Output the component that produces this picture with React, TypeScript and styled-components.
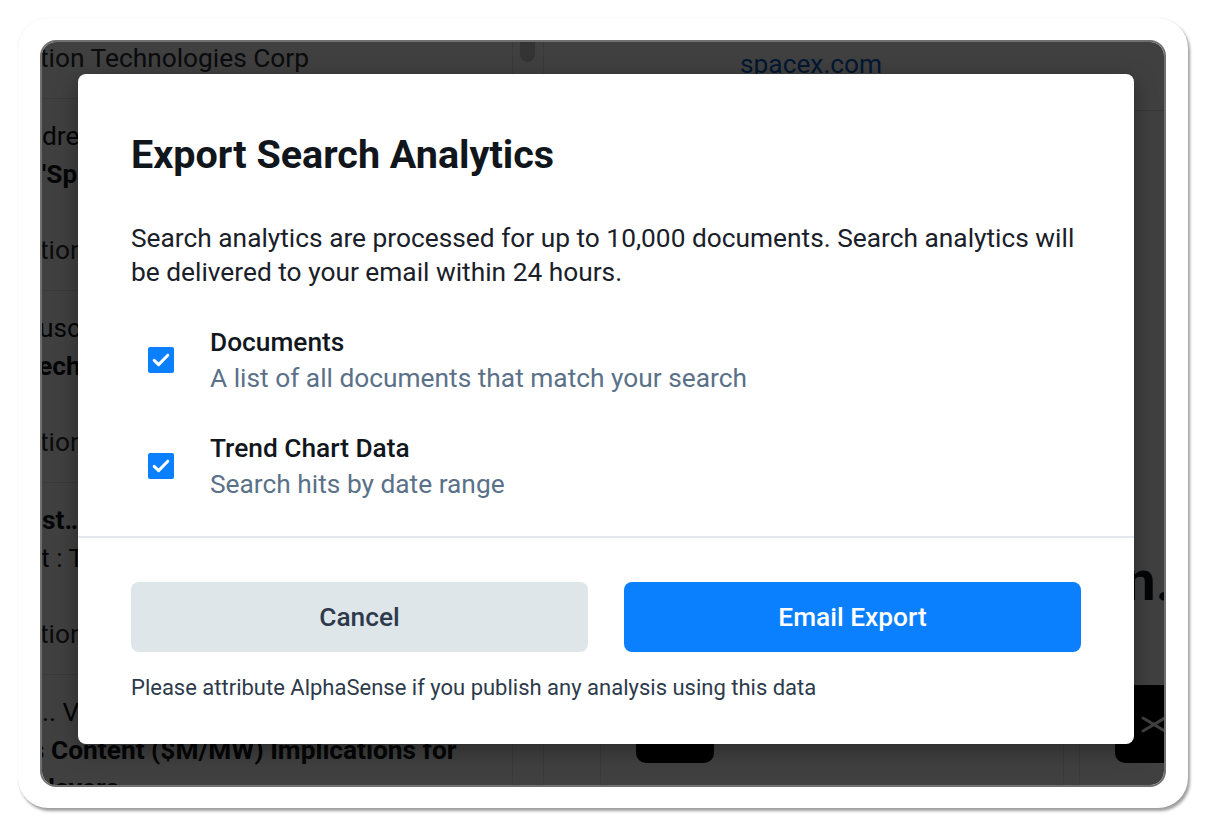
import React from "react";
import styled, { createGlobalStyle } from "styled-components";

const GlobalStyle = createGlobalStyle`
  html, body { margin: 0; padding: 0; background: #ffffff; }
  body {
    font-family: Roboto, "Noto Sans", "Liberation Sans", sans-serif;
    -webkit-font-smoothing: antialiased;
  }
  * { box-sizing: border-box; }
`;

const Stage = styled.div`
  width: 1206px;
  height: 828px;
  padding: 18px;
  display: flex;
  align-items: flex-start;
`;

const Frame = styled.div`
  width: 1170px;
  height: 790px;
  border-radius: 30px;
  background: #ffffff;
  box-shadow: 2px 3px 3px rgba(0, 0, 0, 0.38), 0 0 1px rgba(0, 0, 0, 0.14);
  padding: 22px 22px 21px;
`;

const Window = styled.div`
  position: relative;
  width: 100%;
  height: 100%;
  border: 2px solid #707070;
  border-radius: 16px;
  overflow: hidden;
  background: #ffffff;
`;

/* ---------- background application (dimmed) ---------- */

const Page = styled.div`
  display: flex;
  height: 100%;
  background: #ffffff;
  color: #111418;
`;

const ResultList = styled.div`
  width: 471px;
  flex: none;
  border-right: 1px solid #e2e2e2;
  overflow: hidden;
`;

const ListTail = styled.div`
  height: 57px;
  padding-top: 2px;
  border-bottom: 1px solid #e2e2e2;
`;

const ResultRow = styled.div`
  height: 192px;
  flex: none;
  padding-top: 18px;
  border-bottom: 1px solid #e2e2e2;
`;

const Line = styled.div<{ $bold?: boolean; $shift?: number }>`
  font-size: 26.3px;
  line-height: 38px;
  white-space: nowrap;
  font-weight: ${(p) => (p.$bold ? 700 : 400)};
  margin-left: ${(p) => p.$shift ?? 0}px;
`;

const Company = styled.div<{ $shift?: number; $tight?: boolean }>`
  font-size: 26.3px;
  line-height: ${(p) => (p.$tight ? 28 : 38)}px;
  margin-top: ${(p) => (p.$tight ? 0 : 38)}px;
  white-space: nowrap;
  color: #2a2f36;
  margin-left: ${(p) => p.$shift ?? 0}px;
`;

const ScrollTrack = styled.div`
  width: 31px;
  flex: none;
  border-right: 1px solid #e2e2e2;
`;

const Thumb = styled.div`
  margin-left: 7px;
  width: 15px;
  height: 20px;
  border-radius: 0 0 8px 8px;
  background: #cfcfcf;
`;

const Detail = styled.div`
  flex: 1;
  min-width: 0;
  display: flex;
  flex-direction: column;
`;

const DetailHeader = styled.div`
  height: 69px;
  flex: none;
  padding: 8px 0 0 196px;
  border-bottom: 1px solid #e2e2e2;
`;

const SiteLink = styled.a`
  font-size: 26.3px;
  line-height: 28px;
  color: #0a5cc2;
  text-decoration: none;
`;

const Headline = styled.div`
  flex: none;
  margin: 438px -8px 0 0;
  font-size: 56px;
  line-height: 64px;
  font-weight: 700;
  text-align: right;
  white-space: nowrap;
`;

const CardRow = styled.div`
  flex: none;
  display: flex;
  gap: 15px;
  margin-top: 27px;
  padding-left: 56px;
`;

const Card = styled.div`
  flex: none;
  width: 464px;
  height: 220px;
  padding: 45px 35px;
  border-left: 1px solid #e2e2e2;
  border-right: 1px solid #e2e2e2;
`;

const LogoTile = styled.div`
  width: 78px;
  height: 78px;
  border-radius: 10px;
  background: #000000;
  display: flex;
  align-items: center;
  justify-content: center;
`;

const Overlay = styled.div`
  position: absolute;
  inset: 0;
  background: rgba(0, 0, 0, 0.75);
  padding: 32px 0 0 36px;
`;

/* ---------- modal ---------- */

const Modal = styled.div`
  width: 1056px;
  background: #ffffff;
  border-radius: 8px;
  box-shadow: 0 6px 22px rgba(0, 0, 0, 0.35);
  color: #12171d;
`;

const ModalBody = styled.div`
  padding: 59px 53px 34px;
`;

const Title = styled.h2`
  margin: 0;
  font-size: 39.5px;
  line-height: 44px;
  font-weight: 700;
  color: #11161c;
`;

const Intro = styled.p`
  margin: 44px 0 0;
  font-size: 26.3px;
  line-height: 34px;
  color: #1a2029;
`;

const Options = styled.div`
  margin-top: 35px;
  display: flex;
  flex-direction: column;
  gap: 34px;
`;

const Option = styled.label`
  display: flex;
  align-items: center;
  gap: 36px;
  padding-left: 17px;
  cursor: pointer;
`;

const CheckBox = styled.span`
  width: 26px;
  height: 26px;
  flex: none;
  border-radius: 2px;
  background: #0a80ff;
  display: flex;
  align-items: center;
  justify-content: center;
`;

const OptionText = styled.span`
  display: flex;
  flex-direction: column;
`;

const OptionTitle = styled.span`
  font-size: 26.3px;
  line-height: 36px;
  font-weight: 500;
  color: #12171d;
`;

const OptionDesc = styled.span`
  font-size: 26.3px;
  line-height: 36px;
  color: #5a7189;
`;

const Divider = styled.div`
  height: 2px;
  background: #e5e9ed;
`;

const ModalFooter = styled.div`
  padding: 44px 53px 42px;
`;

const ButtonRow = styled.div`
  display: grid;
  grid-template-columns: 1fr 1fr;
  gap: 36px;
`;

const Button = styled.button<{ $primary?: boolean }>`
  height: 70px;
  border: none;
  border-radius: 8px;
  font-family: inherit;
  font-size: 26.3px;
  font-weight: 500;
  cursor: pointer;
  background: ${(p) => (p.$primary ? "#0a80ff" : "#dfe6ea")};
  color: ${(p) => (p.$primary ? "#ffffff" : "#2d3a4b")};
`;

const Footnote = styled.p`
  margin: 22px 0 0;
  font-size: 22px;
  line-height: 28px;
  color: #2d3a4b;
`;

const Check = () => (
  <svg width="26" height="26" viewBox="0 0 26 26" fill="none">
    <path
      d="M6.2 13.4 L10.6 17.6 L19.8 8.2"
      stroke="#ffffff"
      strokeWidth="3"
      strokeLinecap="round"
      strokeLinejoin="round"
    />
  </svg>
);

const XMark = () => (
  <svg width="78" height="78" viewBox="0 0 78 78" fill="none">
    <path d="M28 33 L50 46" stroke="#ffffff" strokeWidth="3" strokeLinecap="round" />
    <path d="M50 33 L28 46" stroke="#ffffff" strokeWidth="3" strokeLinecap="round" />
  </svg>
);

const rows = [
  {
    a: { text: "dresses Starship Launch Cadence", bold: false, shift: 0 },
    b: { text: "'SpaceX Starship' Program Review", bold: true, shift: 0 },
  },
  {
    a: { text: "uscript: Expert Call Transcript", bold: false, shift: -3 },
    b: { text: "echnology Roadmap for Reusable Rockets", bold: true, shift: -4 },
  },
  {
    a: { text: "st… Satellite Broadband Market", bold: true, shift: 0 },
    b: { text: "t : The Launch Economics Report", bold: false, shift: -1 },
  },
];

export default function App() {
  return (
    <>
      <GlobalStyle />
      <Stage>
        <Frame>
          <Window>
            <Page>
              <ResultList>
                <ListTail>
                  <Company $tight $shift={-2}>tion Technologies Corp</Company>
                </ListTail>
                {rows.map((r, i) => (
                  <ResultRow key={i}>
                    <Line $bold={r.a.bold} $shift={r.a.shift}>{r.a.text}</Line>
                    <Line $bold={r.b.bold} $shift={r.b.shift}>{r.b.text}</Line>
                    <Company $shift={-2}>tion Technologies Corp</Company>
                  </ResultRow>
                ))}
                <ResultRow>
                  <Line>.. View Expert Interview</Line>
                  <Line $bold $shift={-11}>s Content ($M/MW) Implications for</Line>
                  <Line $bold $shift={-11}>Players</Line>
                </ResultRow>
              </ResultList>
              <ScrollTrack>
                <Thumb />
              </ScrollTrack>
              <Detail>
                <DetailHeader>
                  <SiteLink href="#">spacex.com</SiteLink>
                </DetailHeader>
                <Headline>Space Exploration.</Headline>
                <CardRow>
                  <Card>
                    <LogoTile />
                  </Card>
                  <Card>
                    <LogoTile>
                      <XMark />
                    </LogoTile>
                  </Card>
                </CardRow>
              </Detail>
            </Page>
            <Overlay>
              <Modal role="dialog" aria-modal="true">
                <ModalBody>
                  <Title>Export Search Analytics</Title>
                  <Intro>
                    Search analytics are processed for up to 10,000 documents. Search analytics will
                    be delivered to your email within 24 hours.
                  </Intro>
                  <Options>
                    <Option>
                      <CheckBox>
                        <Check />
                      </CheckBox>
                      <OptionText>
                        <OptionTitle>Documents</OptionTitle>
                        <OptionDesc>A list of all documents that match your search</OptionDesc>
                      </OptionText>
                    </Option>
                    <Option>
                      <CheckBox>
                        <Check />
                      </CheckBox>
                      <OptionText>
                        <OptionTitle>Trend Chart Data</OptionTitle>
                        <OptionDesc>Search hits by date range</OptionDesc>
                      </OptionText>
                    </Option>
                  </Options>
                </ModalBody>
                <Divider />
                <ModalFooter>
                  <ButtonRow>
                    <Button>Cancel</Button>
                    <Button $primary>Email Export</Button>
                  </ButtonRow>
                  <Footnote>Please attribute AlphaSense if you publish any analysis using this data</Footnote>
                </ModalFooter>
              </Modal>
            </Overlay>
          </Window>
        </Frame>
      </Stage>
    </>
  );
}
